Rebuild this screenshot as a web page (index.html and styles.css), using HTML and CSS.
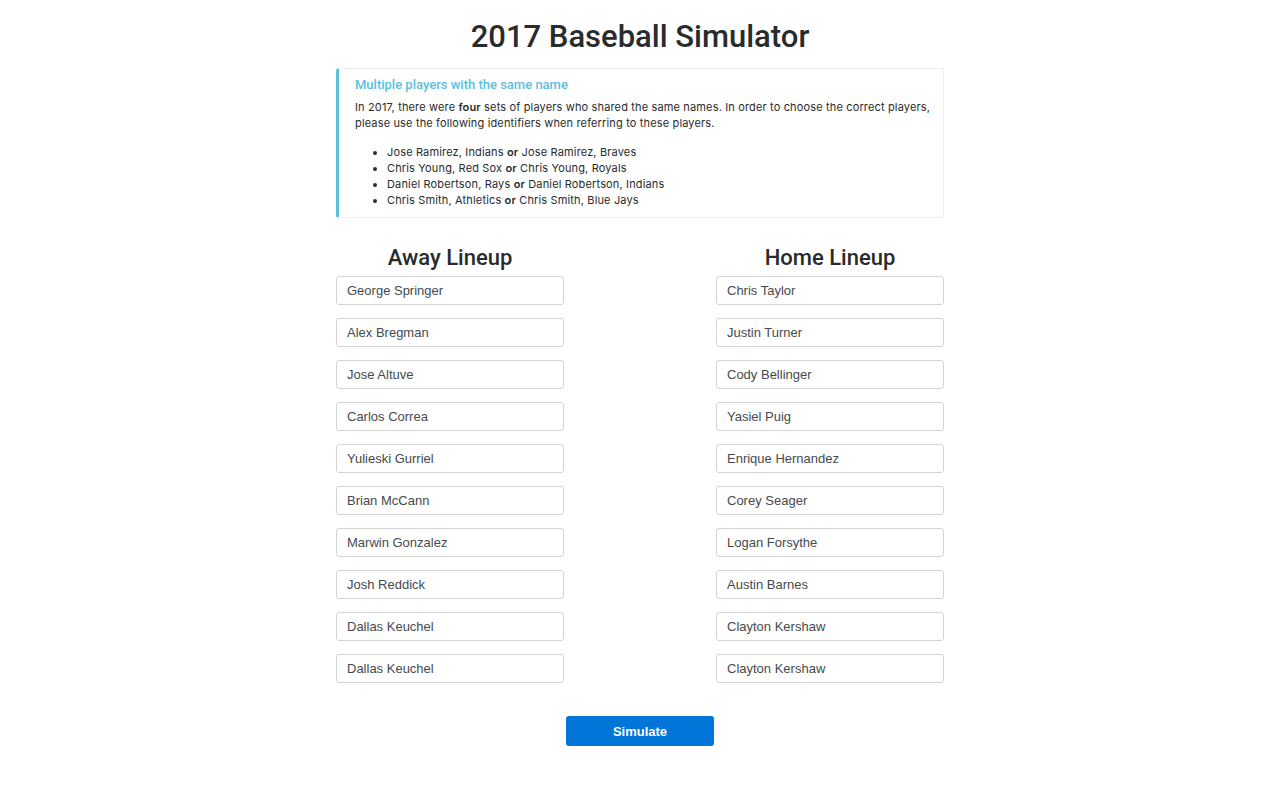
FILE: index.html
```html
<!DOCTYPE html>
<html>
<head>
<meta charset="utf-8">
<title>2017 Baseball Simulator</title>
<link rel="stylesheet" href="styles.css">
</head>
<body>
<div class="container">
  <h1 class="title">2017 Baseball Simulator</h1>
  <div class="callout">
    <h4 class="callout-title">Multiple players with the same name</h4>
    <p class="callout-text">In 2017, there were <b>four</b> sets of players who shared the same names. In order to choose the correct players, please use the following identifiers when referring to these players.</p>
    <ul class="callout-list">
      <li>Jose Ramirez, Indians <b>or</b> Jose Ramirez, Braves</li>
      <li>Chris Young, Red Sox <b>or</b> Chris Young, Royals</li>
      <li>Daniel Robertson, Rays <b>or</b> Daniel Robertson, Indians</li>
      <li>Chris Smith, Athletics <b>or</b> Chris Smith, Blue Jays</li>
    </ul>
  </div>
  <div class="lineups">
    <div class="lineup">
      <h2 class="lineup-title">Away Lineup</h2>
      <input class="player" type="text" value="George Springer">
      <input class="player" type="text" value="Alex Bregman">
      <input class="player" type="text" value="Jose Altuve">
      <input class="player" type="text" value="Carlos Correa">
      <input class="player" type="text" value="Yulieski Gurriel">
      <input class="player" type="text" value="Brian McCann">
      <input class="player" type="text" value="Marwin Gonzalez">
      <input class="player" type="text" value="Josh Reddick">
      <input class="player" type="text" value="Dallas Keuchel">
      <input class="player" type="text" value="Dallas Keuchel">
    </div>
    <div class="lineup">
      <h2 class="lineup-title">Home Lineup</h2>
      <input class="player" type="text" value="Chris Taylor">
      <input class="player" type="text" value="Justin Turner">
      <input class="player" type="text" value="Cody Bellinger">
      <input class="player" type="text" value="Yasiel Puig">
      <input class="player" type="text" value="Enrique Hernandez">
      <input class="player" type="text" value="Corey Seager">
      <input class="player" type="text" value="Logan Forsythe">
      <input class="player" type="text" value="Austin Barnes">
      <input class="player" type="text" value="Clayton Kershaw">
      <input class="player" type="text" value="Clayton Kershaw">
    </div>
  </div>
  <div class="actions">
    <button class="btn-simulate" type="button">Simulate</button>
  </div>
</div>
</body>
</html>
```

FILE: styles.css
```css
* { box-sizing: border-box; }
html, body { margin: 0; padding: 0; background: #fff; }
body {
  font-family: "Liberation Sans", Arial, sans-serif;
  color: #292b2c;
}
.container {
  width: 608px;
  margin: 0 auto;
  padding-top: 18px;
}
.title {
  margin: 0;
  text-align: center;
  font-family: Roboto, "Liberation Sans", Arial, sans-serif;
  font-weight: 500;
  font-size: 31px;
  line-height: 38px;
  color: #292b2c;
}
.callout {
  margin-top: 12px;
  border: 1px solid #eee;
  border-left: 3px solid #5bc0de;
  border-radius: 3px;
  padding: 8px 6px 9px 16px;
}
.callout-title {
  margin: 0 0 6px;
  font-family: Roboto, "Liberation Sans", Arial, sans-serif;
  font-size: 13px;
  line-height: 16px;
  font-weight: 500;
  color: #5bc0de;
}
.callout-text {
  margin: 0 0 13px;
  font-family: Inter, "Open Sans", sans-serif;
  font-size: 11px;
  letter-spacing: 0.15px;
  line-height: 16px;
  color: #292b2c;
}
.callout-list {
  margin: 0;
  padding-left: 32px;
  font-family: Inter, "Open Sans", sans-serif;
  font-size: 11px;
  letter-spacing: 0.15px;
  line-height: 16px;
  color: #292b2c;
}
.callout-list b, .callout-text b { font-weight: 600; }
.lineups {
  display: flex;
  justify-content: space-between;
  margin-top: 27px;
}
.lineup {
  width: 228px;
  display: flex;
  flex-direction: column;
  gap: 13px;
}
.lineup-title {
  margin: 0 0 -8px;
  text-align: center;
  font-family: Roboto, "Liberation Sans", Arial, sans-serif;
  font-size: 22px;
  line-height: 26px;
  font-weight: 500;
}
.player {
  display: block;
  width: 228px;
  height: 29px;
  padding: 0 10px;
  border: 1px solid #d4d4d4;
  border-radius: 3px;
  font-family: "Liberation Sans", Arial, sans-serif;
  font-size: 13px;
  color: #464a4c;
  background: #fff;
  outline: none;
}
.actions {
  display: flex;
  justify-content: center;
  margin-top: 33px;
}
.btn-simulate {
  width: 148px;
  height: 30px;
  border: none;
  border-radius: 3px;
  background: #0275d8;
  color: #fff;
  font-family: "Liberation Sans", Arial, sans-serif;
  font-weight: 700;
  font-size: 13px;
}
```
